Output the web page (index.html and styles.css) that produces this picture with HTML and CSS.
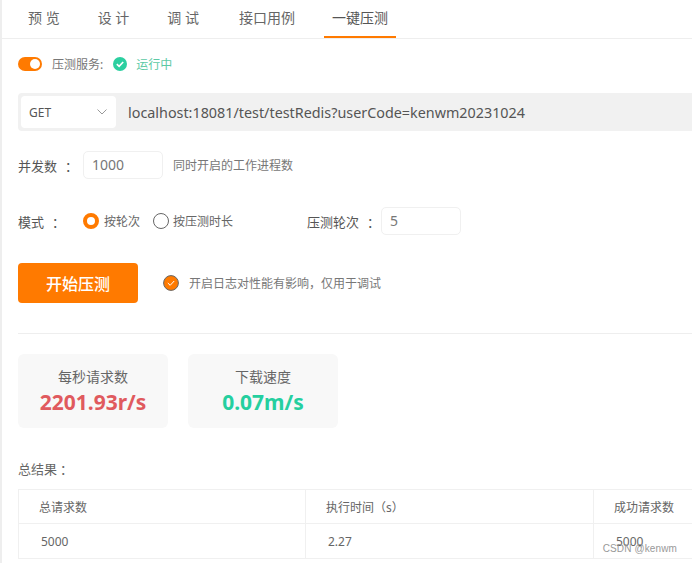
FILE: index.html
```html
<!DOCTYPE html>
<html lang="zh">
<head>
<meta charset="utf-8">
<title>一键压测</title>
<link rel="stylesheet" href="styles.css">
</head>
<body>
<div class="page">
  <nav class="tabs">
    <span class="tab">预 览</span>
    <span class="tab">设 计</span>
    <span class="tab">调 试</span>
    <span class="tab cases">接口用例</span>
    <span class="tab active">一键压测</span>
  </nav>
  <main class="content">
    <div class="service">
      <span class="switch"><span class="knob"></span></span>
      <span class="service-label">压测服务:</span>
      <svg class="ok" width="14" height="14" viewBox="0 0 14 14"><circle cx="7" cy="7" r="7" fill="#2ccfa0"/><path d="M3.800 7.200 6.100 9.400 10.200 5" fill="none" stroke="#fff" stroke-width="1.600"/></svg>
      <span class="running">运行中</span>
    </div>
    <div class="urlbar">
      <div class="method">
        <span>GET</span>
        <svg width="10" height="6" viewBox="0 0 10 6"><path d="M.5.5 5 5 9.500.5" fill="none" stroke="#999" stroke-width="1"/></svg>
      </div>
      <span class="url">localhost:18081/test/testRedis?userCode=kenwm20231024</span>
    </div>
    <div class="row concurrency">
      <span class="label">并发数<span class="colon">：</span></span>
      <span class="input">1000</span>
      <span class="hint">同时开启的工作进程数</span>
    </div>
    <div class="row mode">
      <span class="label mode-label">模式<span class="colon">：</span></span>
      <span class="radio on"></span><span class="radio-text first">按轮次</span>
      <span class="radio"></span><span class="radio-text second">按压测时长</span>
      <span class="label rounds">压测轮次<span class="colon">：</span></span>
      <span class="input">5</span>
    </div>
    <div class="row actions">
      <button class="start">开始压测</button>
      <svg class="check" width="16" height="16" viewBox="0 0 16 16"><circle cx="8" cy="8" r="7.400" fill="#ff7a00" stroke="#666" stroke-width="1"/><path d="M4.800 8 7.200 10.300 11.200 6" fill="none" stroke="#fff" stroke-width="1"/></svg>
      <span class="hint">开启日志对性能有影响，仅用于调试</span>
    </div>
    <hr class="divider">
    <div class="cards">
      <div class="card"><span class="card-title">每秒请求数</span><strong class="value red">2201.93r/s</strong></div>
      <div class="card"><span class="card-title">下载速度</span><strong class="value green">0.07m/s</strong></div>
    </div>
    <div class="result-title">总结果<span class="title-colon">：</span></div>
    <table class="results">
      <thead>
        <tr><th class="c1">总请求数</th><th class="c2">执行时间（s）</th><th class="c3">成功请求数</th></tr>
      </thead>
      <tbody>
        <tr><td>5000</td><td>2.27</td><td>5000</td></tr>
      </tbody>
    </table>
  </main>
  <span class="watermark">CSDN @kenwm</span>
</div>
</body>
</html>
```
FILE: styles.css
```css
html, body {
  margin: 0;
  padding: 0;
  background: #fff;
}
body {
  width: 692px;
  height: 563px;
  overflow: hidden;
  font-family: "Noto Sans", "Noto Sans CJK SC", sans-serif;
  color: #666;
}
.page {
  position: relative;
  width: 690px;
  height: 563px;
  border-left: 2px solid #eee;
  overflow: hidden;
}
.tabs {
  display: flex;
  gap: 22px;
  height: 38px;
  border-bottom: 1px solid #eee;
  padding-left: 18px;
}
.tab {
  padding: 0 8px;
  font-size: 14px;
  line-height: 36px;
  color: #666;
  box-sizing: border-box;
  height: 38px;
}
.tab.cases { margin-left: 2px; }
.tab.active {
  margin-left: -1px;
  color: #555;
  border-bottom: 2px solid #ff7a00;
}
.content {
  padding-left: 16px;
}
.service {
  display: flex;
  align-items: center;
  height: 24px;
  margin-top: 13px;
  font-size: 12px;
}
.switch {
  display: flex;
  justify-content: flex-end;
  align-items: center;
  width: 24px;
  height: 14px;
  padding-right: 2px;
  box-sizing: border-box;
  border-radius: 7px;
  background: #ff7a00;
}
.knob {
  width: 10px;
  height: 10px;
  border-radius: 50%;
  background: #fff;
}
.service-label {
  margin-left: 10px;
  color: #777;
}
.ok { margin-left: 10px; }
.running {
  margin-left: 9px;
  color: #5cc9a4;
}
.urlbar {
  display: flex;
  align-items: center;
  height: 38px;
  margin-top: 17px;
  padding-left: 3px;
  background: #f1f1f1;
  border-radius: 4px 0 0 4px;
}
.method {
  display: flex;
  align-items: center;
  justify-content: space-between;
  width: 95px;
  height: 32px;
  padding: 0 9px 0 8px;
  box-sizing: border-box;
  background: #fff;
  border-radius: 4px;
  font-size: 12px;
  color: #555;
}
.url {
  margin-left: 12px;
  font-size: 14.350px;
  color: #555;
  white-space: nowrap;
}
.row {
  display: flex;
  align-items: center;
  white-space: nowrap;
}
.concurrency {
  margin-top: 20px;
  height: 28px;
}
.label {
  font-size: 13px;
  color: #555;
}
.colon { margin-left: 8px; }
.title-colon { margin-left: 3px; }
.concurrency .label { width: 65px; }
.input {
  width: 80px;
  height: 28px;
  box-sizing: border-box;
  padding-left: 8px;
  border: 1px solid #f0f0f0;
  border-radius: 5px;
  font-size: 14px;
  line-height: 26px;
  color: #777;
}
.hint {
  font-size: 12px;
  color: #777;
}
.concurrency .hint { margin-left: 10px; }
.mode {
  margin-top: 28px;
  height: 28px;
}
.mode-label { width: 65px; }
.radio {
  width: 16px;
  height: 16px;
  box-sizing: border-box;
  border: 1px solid #666;
  border-radius: 50%;
}
.radio.on { border: 4.500px solid #ff7a00; }
.radio-text {
  font-size: 12px;
  color: #666;
  margin-left: 5px;
}
.radio-text.first { width: 49px; }
.radio-text.second { width: 134px; margin-left: 4px; }
.rounds { width: 74px; }
.actions {
  margin-top: 28px;
  height: 40px;
}
.start {
  width: 120px;
  height: 40px;
  border: 0;
  border-radius: 4px;
  background: #ff7a00;
  color: #fff;
  font: 500 16px "Noto Sans", "Noto Sans CJK SC", sans-serif;
}
.check { margin-left: 25px; }
.actions .hint { margin-left: 10px; }
.divider {
  height: 1px;
  margin: 30px 0 0;
  border: 0;
  background: #eee;
}
.cards {
  display: flex;
  gap: 20px;
  margin-top: 20px;
}
.card {
  display: flex;
  flex-direction: column;
  align-items: center;
  width: 150px;
  height: 74px;
  background: #f8f8f8;
  border-radius: 6px;
}
.card-title {
  margin-top: 14px;
  font-size: 14px;
  line-height: 18px;
  color: #666;
}
.value {
  margin-top: 2px;
  font-size: 21px;
  line-height: 28px;
  font-weight: 700;
}
.red { color: #e05a5e; }
.green { color: #25cf9f; }
.result-title {
  margin-top: 32px;
  font-size: 13px;
  line-height: 18px;
  color: #666;
}
.results {
  margin-top: 11px;
  border-collapse: collapse;
  table-layout: fixed;
  width: 775px;
  font-size: 12px;
  color: #666;
}
.results th, .results td {
  box-sizing: border-box;
  border: 1px solid #f0f0f0;
  padding: 0;
  font-weight: 400;
  text-align: left;
}
.results th { height: 34px; padding-left: 20px; }
.results td { height: 35px; padding-left: 22px; }
.c1 { width: 287px; }
.c2 { width: 288px; }
.c3 { width: 200px; }
.watermark {
  position: absolute;
  right: 15px;
  top: 543px;
  font: 10px "Liberation Sans", sans-serif;
  letter-spacing: .13px;
  color: #999;
}
```
